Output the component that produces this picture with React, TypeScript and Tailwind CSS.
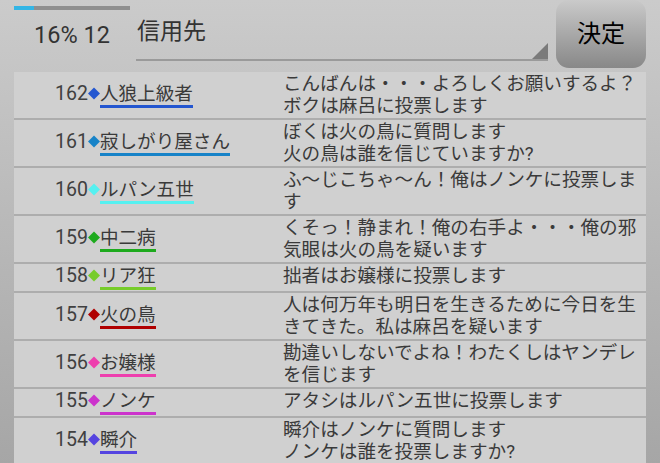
import React from "react";

type Row = { no: number; color: string; name: string; lines: string[] };

const rows: Row[] = [
  { no: 162, color: "#2356d0", name: "人狼上級者", lines: ["こんばんは・・・よろしくお願いするよ？", "ボクは麻呂に投票します"] },
  { no: 161, color: "#1783c8", name: "寂しがり屋さん", lines: ["ぼくは火の鳥に質問します", "火の鳥は誰を信じていますか?"] },
  { no: 160, color: "#55f0f0", name: "ルパン五世", lines: ["ふ〜じこちゃ〜ん！俺はノンケに投票しま", "す"] },
  { no: 159, color: "#1eaa1e", name: "中二病", lines: ["くそっ！静まれ！俺の右手よ・・・俺の邪", "気眼は火の鳥を疑います"] },
  { no: 158, color: "#77cc2a", name: "リア狂", lines: ["拙者はお嬢様に投票します"] },
  { no: 157, color: "#b00000", name: "火の鳥", lines: ["人は何万年も明日を生きるために今日を生", "きてきた。私は麻呂を疑います"] },
  { no: 156, color: "#ee3fae", name: "お嬢様", lines: ["勘違いしないでよね！わたくしはヤンデレ", "を信じます"] },
  { no: 155, color: "#cc33cc", name: "ノンケ", lines: ["アタシはルパン五世に投票します"] },
  { no: 154, color: "#5544e0", name: "瞬介", lines: ["瞬介はノンケに質問します", "ノンケは誰を投票しますか?"] },
];

export default function App() {
  return (
    <div
      className="w-[660px] h-[463px] overflow-hidden bg-gradient-to-b from-[#cbcbcb] to-[#a6a6a6] text-[#3a3a3a]"
      style={{ fontFamily: "Roboto, 'Noto Sans CJK JP', sans-serif" }}
    >
      {/* header */}
      <div className="flex h-[72px]">
        <div className="w-[136px] flex flex-col">
          <div className="ml-[14px] mt-[6px] w-[116px] h-[4px] bg-[#8f8f8f] flex">
            <div className="w-[20px] h-full bg-[#33b5e5]" />
          </div>
          <div className="pl-[34px] mt-[11px] text-[23.5px] leading-[28px] whitespace-nowrap text-[#333]">16% 12</div>
        </div>
        <div className="w-[412px] h-[61px] border-b-2 border-[#9a9a9a] relative flex items-start">
          <div className="pl-[1px] mt-[17px] text-[23px] leading-[30px] text-[#333]">信用先</div>
          <svg className="absolute right-0 bottom-0" width="16" height="16" viewBox="0 0 16 16">
            <polygon points="16,0 16,16 0,16" fill="#7a7a7a" />
          </svg>
        </div>
        <div className="ml-[8px] w-[90px] h-[68px] rounded-[13px] bg-gradient-to-b from-[#cacaca] to-[#888888] flex items-center justify-center text-[24px] text-black">
          決定
        </div>
      </div>
      {/* list */}
      <div className="ml-[14px] w-[632px] bg-[#d0d0d0] text-[18.6px] leading-[22px]">
        {rows.map((r) => (
          <div key={r.no} className="grid grid-cols-[269px_1fr] border-b-2 border-[#adadad] py-[1px]">
            <div className="flex items-center pl-[41px]">
              <div className="flex items-start">
                <span className="leading-[22px] text-[19.5px] text-[#404040]">{r.no}</span>
                <svg width="12" height="22" viewBox="0 0 12 22" className="shrink-0">
                  <polygon points="6,4.5 12,10.5 6,16.5 0,10.5" fill={r.color} />
                </svg>
                <span className="border-b-[3px] whitespace-nowrap" style={{ borderColor: r.color }}>
                  {r.name}
                </span>
              </div>
            </div>
            <div className="whitespace-nowrap">
              {r.lines.map((l, i) => (
                <div key={i}>{l}</div>
              ))}
            </div>
          </div>
        ))}
      </div>
    </div>
  );
}
